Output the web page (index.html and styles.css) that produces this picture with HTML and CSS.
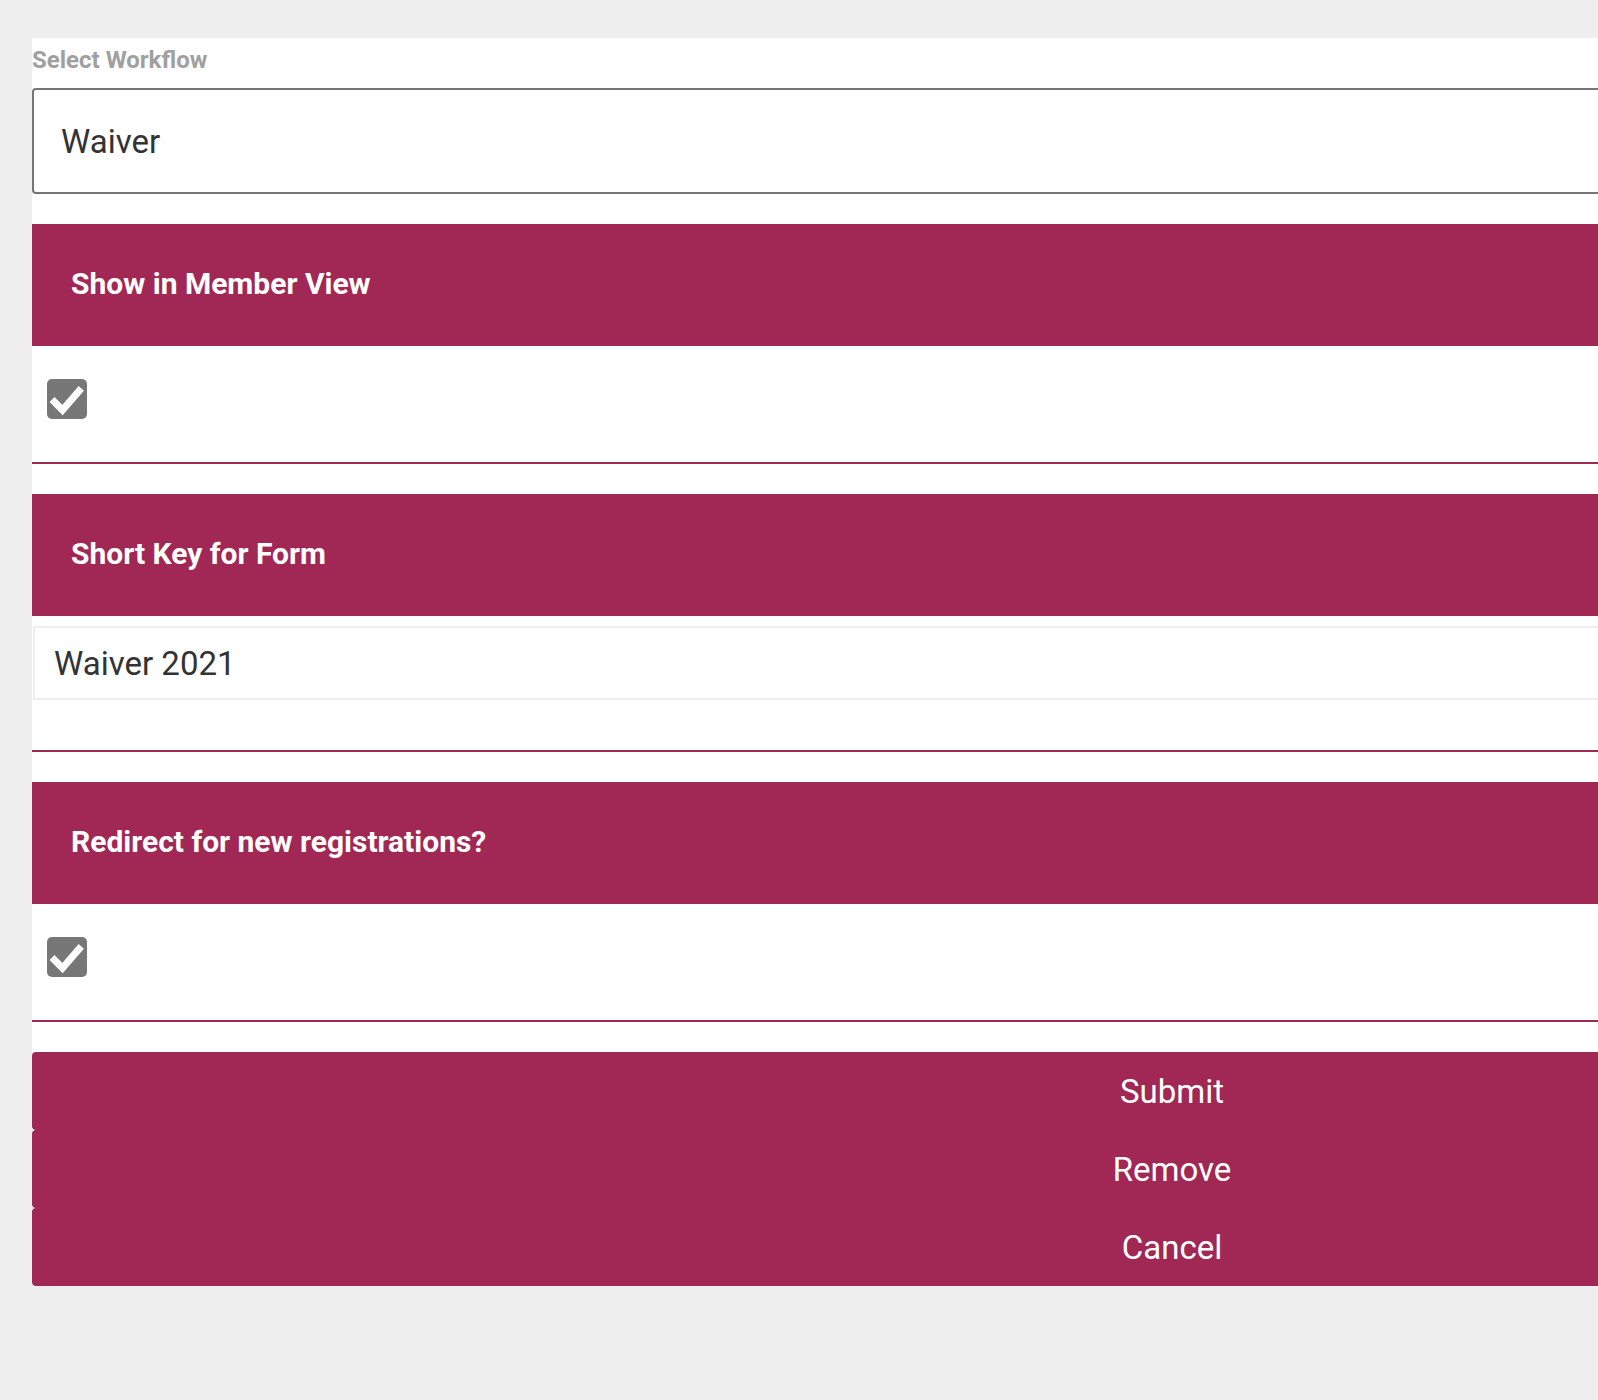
FILE: index.html
```html
<!DOCTYPE html>
<html lang="en">
<head>
<meta charset="utf-8">
<title>Workflow Form</title>
<link rel="stylesheet" href="styles.css">
</head>
<body>
<form class="panel">
  <label class="field-label">Select Workflow</label>
  <div class="select-box">Waiver</div>

  <section class="section">
    <div class="section-header">Show in Member View</div>
    <div class="section-body check-body">
      <span class="checkbox">
        <svg viewBox="0 0 40 40" width="40" height="40"><path d="M7.5 23 L15.5 31 L32 12" fill="none" stroke="#fff" stroke-width="7" stroke-linecap="square" stroke-linejoin="miter"/></svg>
      </span>
    </div>
  </section>

  <section class="section">
    <div class="section-header">Short Key for Form</div>
    <div class="section-body text-body">
      <div class="text-input">Waiver 2021</div>
    </div>
  </section>

  <section class="section">
    <div class="section-header">Redirect for new registrations?</div>
    <div class="section-body check-body">
      <span class="checkbox">
        <svg viewBox="0 0 40 40" width="40" height="40"><path d="M7.5 23 L15.5 31 L32 12" fill="none" stroke="#fff" stroke-width="7" stroke-linecap="square" stroke-linejoin="miter"/></svg>
      </span>
    </div>
  </section>

  <div class="buttons">
    <button type="button" class="btn">Submit</button>
    <button type="button" class="btn">Remove</button>
    <button type="button" class="btn">Cancel</button>
  </div>
</form>
</body>
</html>
```

FILE: styles.css
```css
html, body {
  margin: 0;
  padding: 0;
}
body {
  background: #eeeeee;
  font-family: Roboto, "Liberation Sans", Arial, sans-serif;
  overflow: hidden;
  height: 1400px;
  padding: 38px 0 0 32px;
  box-sizing: border-box;
}
.panel {
  width: 2280px;
  background: #ffffff;
  display: flex;
  flex-direction: column;
  margin: 0;
}
.field-label {
  display: block;
  padding-top: 8px;
  font-size: 24px;
  line-height: 28px;
  font-weight: 700;
  color: #a0a0a0;
}
.select-box {
  margin-top: 14px;
  height: 106px;
  box-sizing: border-box;
  border: 2px solid #757575;
  border-radius: 4px;
  padding-left: 27px;
  display: flex;
  align-items: center;
  font-size: 33px;
  color: #333333;
}
.section {
  margin-top: 30px;
  border-bottom: 2px solid #a12855;
}
.section-header {
  height: 122px;
  box-sizing: border-box;
  padding: 0 0 4px 39px;
  background: #a12855;
  color: #ffffff;
  font-size: 30px;
  font-weight: 700;
  display: flex;
  align-items: center;
}
.check-body {
  height: 116px;
  box-sizing: border-box;
  padding: 33px 0 0 15px;
}
.checkbox {
  display: block;
  width: 40px;
  height: 40px;
  background: #777777;
  border-radius: 5px;
}
.checkbox svg {
  display: block;
}
.text-body {
  height: 134px;
  box-sizing: border-box;
  padding-top: 10px;
}
.text-input {
  margin-left: 1px;
  height: 74px;
  box-sizing: border-box;
  border: 2px solid #eeeeee;
  padding-left: 19px;
  display: flex;
  align-items: center;
  font-size: 33px;
  color: #333333;
}
.buttons {
  margin-top: 30px;
  display: flex;
  flex-direction: column;
}
.btn {
  height: 78px;
  border: none;
  border-radius: 4px;
  background: #a12855;
  color: #ffffff;
  font-family: Roboto, "Liberation Sans", Arial, sans-serif;
  font-size: 33px;
  padding: 0;
  margin: 0;
  display: flex;
  align-items: center;
  justify-content: center;
}
```
